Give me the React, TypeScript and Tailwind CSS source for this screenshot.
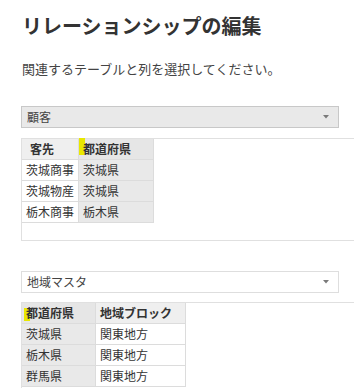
import React from "react";

const font = { fontFamily: '"Noto Sans CJK JP", "Noto Sans", sans-serif' };

function Dropdown({ label, filled }: { label: string; filled?: boolean }) {
  return (
    <div
      className={
        "flex h-[22px] w-[318px] items-center justify-between border pl-[5px] pr-[9px] text-[12px] text-[#444] " +
        (filled ? "border-[#c8c8c8] bg-[#e9e9e9]" : "border-[#dedede] bg-white")
      }
    >
      <span className="leading-none">{label}</span>
      <svg width="6" height="4" viewBox="0 0 6 4">
        <path d="M0 0 L6 0 L3 3.5 Z" fill="#7a7a7a" />
      </svg>
    </div>
  );
}

type Cell = { text: string; sel: boolean };

function Table({
  widths,
  header,
  rows,
  selCol,
  mark,
  headerPad,
  boxH,
}: {
  widths: number[];
  header: string[];
  rows: string[][];
  selCol: number;
  mark: { col: number; left: number; top: number; h: number };
  headerPad: number[];
  boxH: string;
}) {
  return (
    <div className={"border-l border-t border-b border-[#e0e0e0] bg-white " + boxH}>
      <div className="flex flex-col">
        <div className="flex">
          {header.map((h, i) => (
            <div
              key={i}
              style={{ width: widths[i], paddingLeft: headerPad[i] }}
              className={
                "relative flex h-[21px] items-center border-r border-b border-[#dcdcdc] text-[12px] font-bold text-[#333] " +
                (i === selCol ? "bg-[#e6e6e6]" : "bg-[#efefef]")
              }
            >
              {mark.col === i && (
                <span
                  className="absolute w-[6px] bg-[#e8e800]"
                  style={{ left: mark.left, top: mark.top, height: mark.h }}
                />
              )}
              <span className="relative leading-none">{h}</span>
            </div>
          ))}
        </div>
        {rows.map((r, ri) => (
          <div key={ri} className="flex">
            {r.map((c, i) => (
              <div
                key={i}
                style={{ width: widths[i] }}
                className={
                  "flex h-[21px] items-center border-r border-b border-[#dcdcdc] pl-[4px] text-[12px] text-[#333] " +
                  (i === selCol ? "bg-[#e9e9e9]" : "bg-white")
                }
              >
                <span className="leading-none">{c}</span>
              </div>
            ))}
          </div>
        ))}
      </div>
    </div>
  );
}

export default function App() {
  return (
    <div className="h-[388px] w-[354px] overflow-hidden bg-white" style={font}>
      <div className="pl-[21px] pt-[12px]">
        <h1 className="h-[28px] text-[20px] font-bold leading-[28px] text-[#333] pl-[1px]">
          リレーションシップの編集
        </h1>
        <p className="mt-[19px] h-[20px] text-[13px] leading-[20px] text-[#444] pl-[1px]">
          関連するテーブルと列を選択してください。
        </p>
        <div className="mt-[27px]">
          <Dropdown label="顧客" filled />
        </div>
        <div className="mt-[10px]">
          <Table
            widths={[57, 75]}
            header={["客先", "都道府県"]}
            rows={[
              ["茨城商事", "茨城県"],
              ["茨城物産", "茨城県"],
              ["栃木商事", "栃木県"],
            ]}
            selCol={1}
            mark={{ col: 1, left: 0, top: -1, h: 17 }}
            headerPad={[8, 4]}
            boxH="h-[103px]"
          />
        </div>
        <div className="mt-[30px]">
          <Dropdown label="地域マスタ" />
        </div>
        <div className="mt-[9px]">
          <Table
            widths={[74, 90]}
            header={["都道府県", "地域ブロック"]}
            rows={[
              ["茨城県", "関東地方"],
              ["栃木県", "関東地方"],
              ["群馬県", "関東地方"],
            ]}
            selCol={0}
            mark={{ col: 0, left: 2, top: 5, h: 13 }}
            headerPad={[4, 4]}
            boxH="h-[120px]"
          />
        </div>
      </div>
    </div>
  );
}
